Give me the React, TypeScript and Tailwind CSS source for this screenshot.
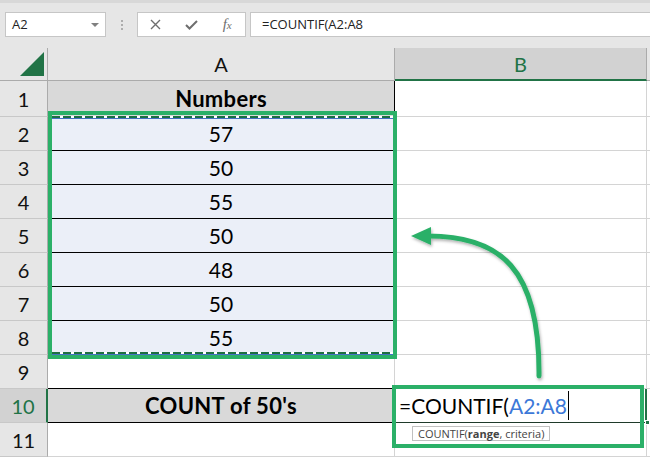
import React from "react";

const ants =
  "bg-[repeating-linear-gradient(90deg,#1d6f42_0px,#1d6f42_8px,#ffffff_8px,#ffffff_11px)]";

function RowHeader({ n, active }: { n: number; active?: boolean }) {
  return (
    <div
      className={
        active
          ? "w-[48px] shrink-0 bg-[#d2d2d2] border-r-2 border-r-[#217346] border-b border-b-[#c8c8c8] flex items-center justify-center text-[20px] text-[#217346]"
          : "w-[48px] shrink-0 bg-[#e6e6e6] border-r border-r-[#ababab] border-b border-b-[#c8c8c8] flex items-center justify-center text-[20px] text-[#111]"
      }
    >
      {n}
    </div>
  );
}

export default function App() {
  const nums = ["57", "50", "55", "50", "48", "50", "55"];
  return (
    <div className="relative w-[650px] h-[457px] overflow-hidden bg-white font-[Lato,sans-serif]">
      {/* formula bar */}
      <div className="h-[48px] bg-[#e6e6e6] flex flex-col">
        <div className="h-[3px] bg-[#d8d8d8]" />
        <div className="flex items-center h-[25px] mt-[9px] pl-[5px] font-['Open_Sans',sans-serif] text-[13px] text-[#222]">
          <div className="w-[101px] h-[25px] shrink-0 bg-white border border-[#c6c6c6] flex items-center justify-between pl-[6px] pr-[6px]">
            <span>A2</span>
            <span className="w-0 h-0 border-l-[4px] border-r-[4px] border-t-[4px] border-l-transparent border-r-transparent border-t-[#808080]" />
          </div>
          <div className="w-[31px] shrink-0 flex flex-col items-center gap-[2px]">
            <span className="w-[2px] h-[2px] bg-[#adadad]" />
            <span className="w-[2px] h-[2px] bg-[#adadad]" />
            <span className="w-[2px] h-[2px] bg-[#adadad]" />
          </div>
          <div className="w-[109px] h-[25px] shrink-0 bg-white border border-[#c6c6c6] flex items-center">
            <div className="w-[36px] flex justify-center">
              <svg width="11" height="11" viewBox="0 0 11 11">
                <path d="M1 1L10 10M10 1L1 10" stroke="#6e6e6e" strokeWidth="1.4" fill="none" />
              </svg>
            </div>
            <div className="w-[36px] flex justify-center">
              <svg width="13" height="10" viewBox="0 0 13 10">
                <path d="M1 5L4.5 8.5L12 1" stroke="#6e6e6e" strokeWidth="2" fill="none" />
              </svg>
            </div>
            <div className="w-[36px] flex justify-center">
              <span className="font-['Liberation_Serif',serif] italic text-[15px] text-[#6e6e6e] leading-none">
                f<span className="text-[11px]">x</span>
              </span>
            </div>
          </div>
          <div className="ml-[4px] flex-1 h-[25px] bg-white border border-r-0 border-[#c6c6c6] pl-[11px] flex items-center">
            =COUNTIF(A2:A8
          </div>
        </div>
      </div>

      {/* column headers */}
      <div className="flex h-[33px]">
        <div className="relative w-[48px] shrink-0 border-r border-b border-[#ababab] bg-[#e6e6e6]">
          <svg className="absolute left-0 top-0" width="48" height="33" viewBox="0 0 48 33">
            <polygon points="44,4 44,28 20,28" fill="#217346" />
          </svg>
        </div>
        <div className="w-[347px] shrink-0 bg-[#e6e6e6] border-r border-b border-[#ababab] flex items-center justify-center text-[20px] text-[#111]">
          A
        </div>
        <div className="w-[252px] shrink-0 bg-[#d2d2d2] border-r border-r-[#ababab] border-b-2 border-b-[#217346] flex items-center justify-center text-[20px] text-[#217346]">
          B
        </div>
        <div className="flex-1 bg-[#e6e6e6] border-b border-[#ababab]" />
      </div>

      {/* row 1 */}
      <div className="flex h-[36px]">
        <RowHeader n={1} />
        <div className="w-[347px] shrink-0 bg-[#d9d9d9] border-r border-b border-black flex items-center justify-center text-[22px] tracking-[0.3px] font-bold text-black">
          Numbers
        </div>
        <div className="w-[252px] shrink-0 border-r border-b border-[#d4d4d4]" />
        <div className="flex-1 border-b border-[#d4d4d4]" />
      </div>

      {/* rows 2-8 */}
      {nums.map((v, i) => (
        <div key={i} className="flex h-[34px]">
          <RowHeader n={i + 2} />
          <div className="w-[347px] shrink-0 bg-[#ebeff8] border-r border-b border-black flex items-center justify-center text-[21px] text-black">
            {v}
          </div>
          <div className="w-[252px] shrink-0 border-r border-b border-[#d4d4d4]" />
          <div className="flex-1 border-b border-[#d4d4d4]" />
        </div>
      ))}

      {/* row 9 */}
      <div className="flex h-[34px]">
        <RowHeader n={9} />
        <div className="w-[347px] shrink-0 border-r border-r-[#d4d4d4] border-b border-b-black" />
        <div className="w-[252px] shrink-0 border-r border-b border-[#d4d4d4]" />
        <div className="flex-1 border-b border-[#d4d4d4]" />
      </div>

      {/* row 10 */}
      <div className="flex h-[34px]">
        <RowHeader n={10} active />
        <div className="w-[347px] shrink-0 bg-[#d9d9d9] border-r border-r-[#d4d4d4] border-b border-b-black flex items-center justify-center text-[22px] tracking-[0.3px] font-bold text-black">
          COUNT of 50's
        </div>
        <div className="w-[252px] shrink-0 border-r-2 border-r-[#217346] border-b border-b-[#1f3a2a] flex items-center pl-[4px] text-[21px] text-black">
          <span>=COUNTIF(</span>
          <span className="text-[#3c78d8]">A2:A8</span>
          <span className="w-[1px] h-[29px] bg-black ml-[1px]" />
        </div>
        <div className="flex-1 border-b border-[#d4d4d4]" />
      </div>

      {/* row 11 */}
      <div className="flex h-[34px]">
        <RowHeader n={11} />
        <div className="w-[347px] shrink-0 border-r border-b border-[#d4d4d4]" />
        <div className="w-[252px] shrink-0 border-r border-b border-[#d4d4d4]" />
        <div className="flex-1 border-b border-[#d4d4d4]" />
      </div>

      {/* marching ants */}
      <div className={`absolute left-[52px] top-[116px] w-[341px] h-[3px] border-b border-b-[#4472c4] ${ants}`} />
      <div className={`absolute left-[52px] top-[352px] w-[341px] h-[3px] border-b border-b-[#4472c4] ${ants}`} />

      {/* fill handle of active cell */}
      <div className="absolute left-[645px] top-[420px] w-[5px] h-[5px] bg-[#217346] border border-white" />

      {/* green annotation boxes */}
      <div className="absolute left-[48px] top-[111px] w-[349px] h-[248px] border-4 border-[#2bb068]" />
      <div className="absolute left-[392px] top-[385px] w-[252px] h-[63px] border-4 border-[#2bb068]" />

      {/* tooltip */}
      <div className="absolute left-[412px] top-[426px] h-[15px] px-[5px] bg-white border border-[#c0c0c0] flex items-center font-['Open_Sans',sans-serif] text-[11px] text-[#444] leading-none">
        COUNTIF(<span className="font-bold">range</span>, criteria)
      </div>

      {/* arrow */}
      <svg className="absolute left-0 top-0 pointer-events-none" width="650" height="457" viewBox="0 0 650 457">
        <defs>
          <filter id="sh" x="-20%" y="-20%" width="140%" height="140%">
            <feDropShadow dx="1" dy="2" stdDeviation="1.5" floodColor="#000" floodOpacity="0.3" />
          </filter>
        </defs>
        <g filter="url(#sh)">
          <path d="M428 236 C500 236 540 268 539 376" stroke="#2bb068" strokeWidth="5" fill="none" strokeLinecap="round" />
          <polygon points="411,236 431,227 431,245" fill="#2bb068" />
        </g>
      </svg>
    </div>
  );
}
